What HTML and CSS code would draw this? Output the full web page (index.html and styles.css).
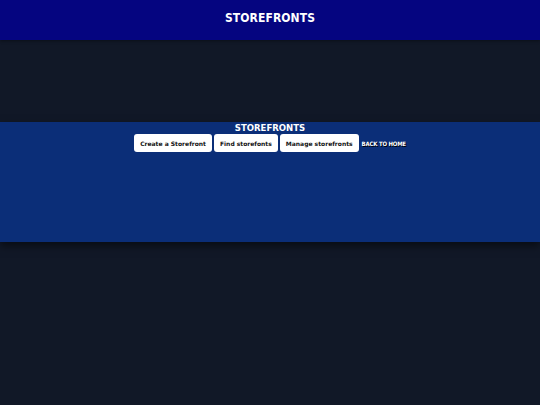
FILE: index.html
```html
<!DOCTYPE html>
<html>
<head>
<meta charset="utf-8">
<link rel="stylesheet" href="styles.css">
</head>
<body>
<header class="topbar"><h1 class="brand">STOREFRONTS</h1></header>
<main class="page">
  <section class="panel">
    <h2 class="panel-title">STOREFRONTS</h2>
    <nav class="actions">
      <a class="btn">Create a Storefront</a>
      <a class="btn">Find storefonts</a>
      <a class="btn">Manage storefronts</a>
      <a class="back">BACK TO HOME</a>
    </nav>
  </section>
</main>
</body>
</html>
```
FILE: styles.css
```css
html, body { margin: 0; padding: 0; }
body {
  background: #111827;
  font-family: "DejaVu Sans", sans-serif;
  height: 405px;
  overflow: hidden;
}
.topbar {
  height: 40px;
  box-sizing: border-box;
  padding-bottom: 5px;
  background: #050580;
  display: flex;
  align-items: center;
  justify-content: center;
  box-shadow: 0 1px 3px rgba(0,0,0,0.4);
}
.brand {
  margin: 0;
  color: #fff;
  font-family: "DejaVu Sans Condensed", "DejaVu Sans", sans-serif;
  font-weight: bold;
  font-size: 12px;
  letter-spacing: 0.1px;
}
.page { padding-top: 82px; }
.panel {
  height: 120px;
  background: #0b2e78;
  box-shadow: 0 4px 8px rgba(0,0,0,0.5);
  display: flex;
  flex-direction: column;
  align-items: center;
}
.panel-title {
  margin: 0;
  color: #fff;
  font-family: "DejaVu Sans Condensed", "DejaVu Sans", sans-serif;
  font-weight: bold;
  font-size: 9.5px;
  line-height: 11px;
}
.actions {
  display: flex;
  align-items: center;
  gap: 2px;
  margin-top: 1px;
}
.btn {
  background: #fff;
  color: #111;
  font-weight: bold;
  font-size: 6px;
  height: 18px;
  padding: 0 6px;
  border-radius: 3px;
  display: flex;
  align-items: center;
}
.back {
  color: #fff;
  font-family: "DejaVu Sans Condensed", "DejaVu Sans", sans-serif;
  font-weight: bold;
  font-size: 6px;
  letter-spacing: -0.2px;
  text-shadow: 1px 1px 0 #000;
  margin-left: 1px;
}
```
